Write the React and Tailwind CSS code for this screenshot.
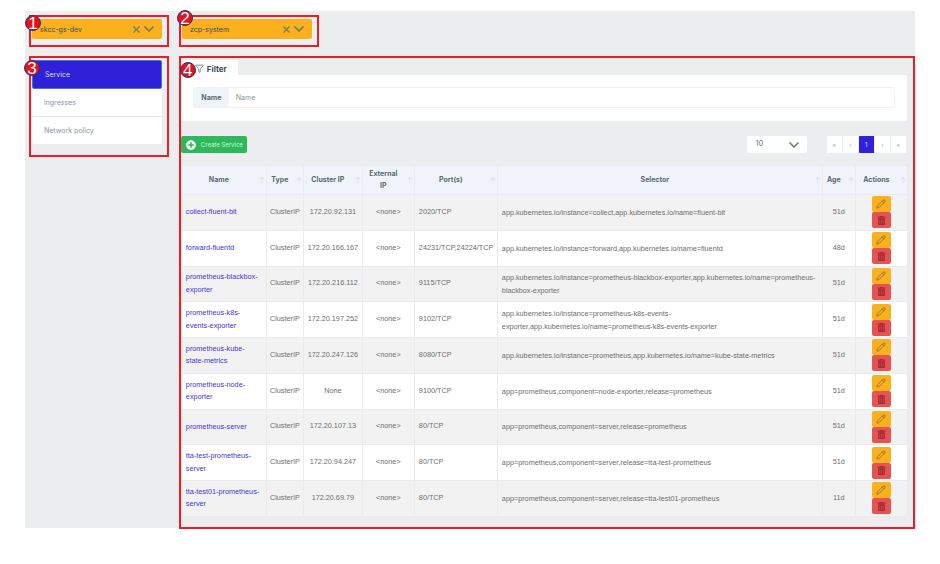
import { ArrowUp, ChevronDown, Filter, Pencil, X } from 'lucide-react'
import { FaPlusCircle, FaTrashAlt } from 'react-icons/fa'

const NAMESPACES = [
  { name: 'skcc-gs-dev', badge: '-left-[6px] -top-[2px]' },
  { name: 'zcp-system', badge: '-left-[4px] -top-[7px]' },
]
const COLUMNS = [
  { label: 'Name', width: 'w-[85px]' },
  { label: 'Type', width: 'w-[37px]' },
  { label: 'Cluster IP', width: 'w-[59px]' },
  { label: 'External IP', width: 'w-[52px]' },
  { label: 'Port(s)', width: 'w-[83px]' },
  { label: 'Selector', width: 'w-[325px]' },
  { label: 'Age', width: 'w-[33px]' },
  { label: 'Actions', width: 'w-[52px]' },
]
const SERVICES = [
  ['collect-fluent-bit', '172.20.92.131', '<none>', '2020/TCP', 'app.kubernetes.io/instance=collect,app.kubernetes.io/name=fluent-bit', '51d'],
  ['forward-fluentd', '172.20.166.167', '<none>', '24231/TCP,24224/TCP', 'app.kubernetes.io/instance=forward,app.kubernetes.io/name=fluentd', '48d'],
  ['prometheus-blackbox-exporter', '172.20.216.112', '<none>', '9115/TCP', 'app.kubernetes.io/instance=prometheus-blackbox-exporter,app.kubernetes.io/name=prometheus-blackbox-exporter', '51d'],
  ['prometheus-k8s-events-exporter', '172.20.197.252', '<none>', '9102/TCP', 'app.kubernetes.io/instance=prometheus-k8s-events-exporter,app.kubernetes.io/name=prometheus-k8s-events-exporter', '51d'],
  ['prometheus-kube-state-metrics', '172.20.247.126', '<none>', '8080/TCP', 'app.kubernetes.io/instance=prometheus,app.kubernetes.io/name=kube-state-metrics', '51d'],
  ['prometheus-node-exporter', 'None', '<none>', '9100/TCP', 'app=prometheus,component=node-exporter,release=prometheus', '51d'],
  ['prometheus-server', '172.20.107.13', '<none>', '80/TCP', 'app=prometheus,component=server,release=prometheus', '51d'],
  ['tta-test-prometheus-server', '172.20.94.247', '<none>', '80/TCP', 'app=prometheus,component=server,release=tta-test-prometheus', '51d'],
  ['tta-test01-prometheus-server', '172.20.69.79', '<none>', '80/TCP', 'app=prometheus,component=server,release=tta-test01-prometheus', '11d'],
]

function Badge({ n, className }) {
  return (
    <span className={`absolute z-10 flex h-[16px] w-[16px] items-center justify-center rounded-full border border-[#1f3a7a] bg-[#e8101c] font-['Liberation_Sans',sans-serif] text-[17px] leading-none text-white ${className}`}>
      {n}
    </span>
  )
}

export default function App() {
  return (
    <div className="h-[564px] w-[940px] bg-white pl-[25px] pt-[11px] font-['Inter',sans-serif]">
      <div className="h-[517px] w-[890px] bg-[#ebedef] pl-[4px] pt-[4px]">
        {/* Namespace selects */}
        <div className="flex gap-[10px]">
          {NAMESPACES.map((ns, i) => (
            <div key={ns.name} className="relative h-[32px] w-[140px] border-2 border-[#ee1c25] pl-[1px] pt-[2px]">
              <Badge n={i + 1} className={ns.badge} />
              <div className="flex h-[20px] w-[130px] items-center rounded-[2px] bg-[#fbb01d] pl-[8px] pr-[5px] text-[7px] text-[#3c4b64]">
                <span className="flex-1 pt-[2px]">{ns.name}</span>
                <X size={11} strokeWidth={2.5} className="-mr-[1px] text-[#77776a]" />
                <ChevronDown size={16} strokeWidth={2.5} className="-mt-[1px] text-[#77776a]" />
              </div>
            </div>
          ))}
        </div>

        <div className="mt-[9px] flex gap-[10px]">
          {/* Side menu */}
          <div className="relative h-[101px] w-[140px] border-2 border-[#ee1c25] pl-[1px] pt-[2px]">
            <Badge n={3} className="-left-[7px] top-[2px]" />
            <div className="w-[130px] rounded-[2px] bg-white text-[7px] text-[#8a93a2]">
              <div className="flex h-[29px] items-center rounded-[2px] border border-[#3c7ad0] bg-[#3020d8] pl-[12px] pt-[1px] text-[#dcdcf8]">Service</div>
              <div className="flex h-[28px] items-center border-b border-[#e4e7ea] pl-[12px] pt-[1px]">ingresses</div>
              <div className="flex h-[27px] items-center pl-[12px] pt-[2px]">Network policy</div>
            </div>
          </div>

          {/* Service list */}
          <div className="relative h-[473px] w-[737px] border-2 border-[#ee1c25] pt-[2px]">
            <Badge n={4} className="-left-[1px] top-[4px]" />
            <div className="flex h-[15px] w-[57px] items-center rounded-t-[3px] bg-white pl-[14px] pt-[2px] text-[8px] font-bold text-[#3c4b64]">
              <Filter size={9} className="mr-[3px] shrink-0 text-[#5c6873]" />
              Filter
            </div>
            <div className="h-[46px] w-[726px] rounded-b-[2px] bg-white p-[12px]">
              <div className="flex h-[21px] w-[702px] overflow-hidden rounded-[3px] border border-[#eef0f3] text-[7px]">
                <div className="flex w-[35px] items-center justify-center bg-[#f0f3f9] pt-[1px] font-bold text-[#5c6873]">Name</div>
                <div className="flex flex-1 items-center pl-[7px] pt-[1px] text-[#8a93a2]">Name</div>
              </div>
            </div>

            <div className="mt-[15px] flex h-[17px] w-[726px] items-center">
              <button className="flex h-[17px] w-[66px] items-center rounded-[2px] bg-[#2eb85c] pl-[5px] text-[6px] text-[#d5f3df]">
                <FaPlusCircle size={10} className="mr-[5px] text-white" />
                Create Service
              </button>
              <div className="ml-auto flex h-[17px] w-[60px] items-center justify-between rounded-[2px] bg-white pl-[9px] pr-[5px] text-[7px] text-[#5c6873]">
                10
                <ChevronDown size={16} strokeWidth={2.5} className="text-[#77776f]" />
              </div>
              <div className="ml-[20px] flex h-[17px] w-[80px] items-center text-[6px] text-[#9da5b1]">
                {['«', '‹', '1', '›', '»'].map((p) => (
                  <span
                    key={p}
                    className={`flex h-full w-[16px] items-center justify-center border-r border-[#eef0f3] ${
                      p === '1' ? 'rounded-[1px] bg-[#3020d8] text-[#dcdcf8]' : 'bg-white'
                    }`}
                  >
                    {p}
                  </span>
                ))}
              </div>
            </div>

            <table className="mt-[12px] w-[726px] table-fixed border-collapse text-[7.25px] text-[#6e6e6e]">
              <colgroup>
                {COLUMNS.map((c) => <col key={c.label} className={c.width} />)}
              </colgroup>
              <thead>
                <tr className="h-[29px] bg-[#f0f3fb]">
                  {COLUMNS.map((c) => (
                    <th key={c.label} className="relative border border-[#e9ebee] pl-[4px] pr-[14px] text-center text-[7px] font-bold leading-[12.5px] text-[#5c6873]">
                      {c.label}
                      <ArrowUp size={8} strokeWidth={1.5} className="absolute right-[0px] top-[10px] text-[#c8ced3]" />
                    </th>
                  ))}
                </tr>
              </thead>
              <tbody className="font-['Liberation_Sans',sans-serif]">
                {SERVICES.map((s, i) => (
                  <tr key={s[0]} className={`h-[35.75px] ${i % 2 === 0 ? 'bg-[#f2f2f2]' : 'bg-white'}`}>
                    <td className="border border-[#e9ebee] pl-[4px] pr-[4px] leading-[12.5px] text-[#4234e2]">{s[0]}</td>
                    <td className="border border-[#e9ebee] text-center">ClusterIP</td>
                    <td className="border border-[#e9ebee] text-center">{s[1]}</td>
                    <td className="border border-[#e9ebee] text-center">{s[2]}</td>
                    <td className="border border-[#e9ebee] pl-[4px] whitespace-nowrap">{s[3]}</td>
                    <td className="border border-[#e9ebee] pl-[4px] pr-[3px] leading-[13px]">{s[4]}</td>
                    <td className="border border-[#e9ebee] text-center">{s[5]}</td>
                    <td className="border border-[#e9ebee]">
                      <div className="flex flex-col items-center">
                        <span className="flex h-[16px] w-[19px] items-center justify-center rounded-[2px] bg-[#fbb01d]">
                          <Pencil size={10} strokeWidth={1.5} className="text-[#5f5a4a]" />
                        </span>
                        <span className="flex h-[16px] w-[19px] items-center justify-center rounded-[2px] bg-[#e55353]">
                          <FaTrashAlt size={9} className="text-[#a32a33]" />
                        </span>
                      </div>
                    </td>
                  </tr>
                ))}
              </tbody>
            </table>
          </div>
        </div>
      </div>
    </div>
  )
}
